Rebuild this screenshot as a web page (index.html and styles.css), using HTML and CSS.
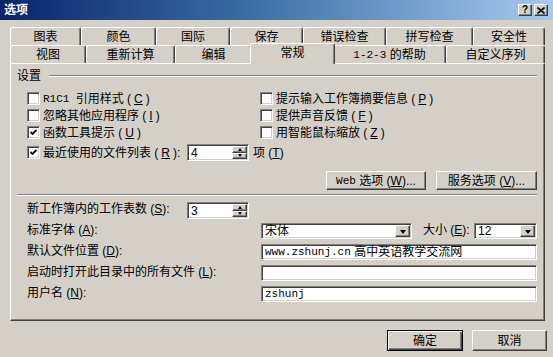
FILE: index.html
```html
<!DOCTYPE html>
<html lang="zh-CN">

<head>
    <meta charset="UTF-8" />
    <title>选项</title>
    <link rel="stylesheet" href="styles.css">
</head>

<body>

    <div class="dialog">
        <div class="titlebar">
            <span class="title">选项</span>
            <div class="caption-buttons">
                <button class="caption-btn help">?</button>
                <button class="caption-btn close">
                    <svg width="8" height="7" viewBox="0 0 8 7"><path d="M0.5 0.5L7.5 6.5M7.5 0.5L0.5 6.5" stroke="#000" stroke-width="1.6" /></svg>
                </button>
            </div>
        </div>

        <div class="tabs">
            <div class="tab-row back">
                <div class="tab">图表</div>
                <div class="tab">颜色</div>
                <div class="tab">国际</div>
                <div class="tab">保存</div>
                <div class="tab">错误检查</div>
                <div class="tab">拼写检查</div>
                <div class="tab">安全性</div>
            </div>
            <div class="tab-row front">
                <div class="tab">视图</div>
                <div class="tab">重新计算</div>
                <div class="tab">编辑</div>
                <div class="tab active">常规</div>
                <div class="tab"><span class="mono">1-2-3</span>&nbsp;的帮助</div>
                <div class="tab">自定义序列</div>
            </div>
        </div>

        <div class="panel">
            <div class="group-title">
                <span>设置</span>
                <div class="etched"></div>
            </div>

            <div class="checks">
                <label class="check"><span class="box"></span><span class="mono">R1C1</span>&nbsp;引用样式 (<u>C</u>)</label>
                <label class="check"><span class="box"></span>提示输入工作簿摘要信息 (<u>P</u>)</label>
                <label class="check"><span class="box"></span>忽略其他应用程序 (<u>I</u>)</label>
                <label class="check"><span class="box"></span>提供声音反馈 (<u>F</u>)</label>
                <label class="check"><span class="box checked"><svg width="7" height="7" viewBox="0 0 7 7"><path d="M0.5 3L2.5 5L6.5 1" fill="none" stroke="#000" stroke-width="1.8" /></svg></span>函数工具提示 (<u>U</u>)</label>
                <label class="check"><span class="box"></span>用智能鼠标缩放 (<u>Z</u>)</label>
                <div class="recent">
                    <label class="check recent-label"><span class="box checked"><svg width="7" height="7" viewBox="0 0 7 7"><path d="M0.5 3L2.5 5L6.5 1" fill="none" stroke="#000" stroke-width="1.8" /></svg></span>最近使用的文件列表 (<u>R</u>):</label>
                    <div class="spin">
                        <span class="field-text">4</span>
                        <div class="spin-btns">
                            <span class="spin-btn"><i class="arrow-up"></i></span>
                            <span class="spin-btn"><i class="arrow-down"></i></span>
                        </div>
                    </div>
                    <span class="unit">项 (<u>T</u>)</span>
                </div>
            </div>

            <div class="panel-buttons">
                <button class="btn web-btn"><span class="mono">Web</span>&nbsp;选项 (<u>W</u>)...</button>
                <button class="btn service-btn">服务选项 (<u>V</u>)...</button>
            </div>

            <div class="etched"></div>

            <div class="form">
                <div class="form-row short">
                    <span class="form-label">新工作簿内的工作表数 (<u>S</u>):</span>
                    <div class="spin">
                        <span class="field-text">3</span>
                        <div class="spin-btns">
                            <span class="spin-btn"><i class="arrow-up"></i></span>
                            <span class="spin-btn"><i class="arrow-down"></i></span>
                        </div>
                    </div>
                </div>
                <div class="form-row">
                    <span class="form-label">标准字体 (<u>A</u>):</span>
                    <div class="combo font-combo">
                        <span class="field-text">宋体</span>
                        <span class="drop-btn"><i class="arrow-down big"></i></span>
                    </div>
                    <span class="size-label">大小 (<u>E</u>):</span>
                    <div class="combo size-combo">
                        <span class="field-text">12</span>
                        <span class="drop-btn"><i class="arrow-down big"></i></span>
                    </div>
                </div>
                <div class="form-row">
                    <span class="form-label">默认文件位置 (<u>D</u>):</span>
                    <div class="textbox"><span class="mono">www.zshunj.cn</span>&nbsp;高中英语教学交流网</div>
                </div>
                <div class="form-row">
                    <span class="form-label">启动时打开此目录中的所有文件 (<u>L</u>):</span>
                    <div class="textbox"></div>
                </div>
                <div class="form-row">
                    <span class="form-label">用户名 (<u>N</u>):</span>
                    <div class="textbox"><span class="mono">zshunj</span></div>
                </div>
            </div>
        </div>

        <div class="footer">
            <button class="btn default-btn">确定</button>
            <button class="btn cancel-btn">取消</button>
        </div>
    </div>

</body>

</html>
```

FILE: styles.css
```css
* {
    box-sizing: border-box;
    margin: 0;
    padding: 0;
}

body {
    width: 553px;
    height: 357px;
    overflow: hidden;
    background: #d4d0c8;
    font-family: "Liberation Sans", "Noto Sans CJK SC", sans-serif;
    font-size: 12px;
    color: #000;
    text-autospace: no-autospace;
}

u {
    text-decoration: underline;
    text-underline-offset: 1px;
}

.mono {
    font-family: "Liberation Mono", monospace;
    font-size: 11px;
}

/* title bar */
.titlebar {
    height: 20px;
    display: flex;
    align-items: center;
    justify-content: space-between;
    padding: 0 5px 0 4px;
    background: linear-gradient(to right, #0a246a, #3a6ea5 45%, #a6caf0);
}

.title {
    color: #fff;
    font-weight: bold;
    line-height: 14px;
}

.caption-buttons {
    display: flex;
    gap: 2px;
}

.caption-btn {
    width: 14px;
    height: 12px;
    display: flex;
    align-items: center;
    justify-content: center;
    background: #d4d0c8;
    border: 1px solid;
    border-color: #fff #404040 #404040 #fff;
    box-shadow: inset -1px -1px #808080;
    font-family: "Liberation Sans", sans-serif;
    font-size: 10px;
    font-weight: bold;
    line-height: 10px;
}

/* tabs */
.tabs {
    padding: 7px 0 0 10px;
    width: 545px;
}

.tab-row {
    display: grid;
    height: 18px;
}

.tab-row.back {
    grid-template-columns: 71px 75px 74px 73px 83px 87px 72px;
}

.tab-row.front {
    grid-template-columns: 76px 89px 77px 81px 113px 99px;
}

.tab {
    display: flex;
    align-items: center;
    justify-content: center;
    line-height: 14px;
    background: #d4d0c8;
    border-top: 1px solid #fff;
    border-left: 1px solid #fff;
    border-right: 1px solid #404040;
    border-radius: 3px 3px 0 0;
    box-shadow: inset -1px 0 #808080;
}

.tab.active {
    position: relative;
    z-index: 1;
    margin: -2px -2px -1px;
    padding-bottom: 2px;
}

/* page */
.panel {
    margin-left: 10px;
    width: 535px;
    height: 258px;
    padding: 5px 7px 0 6px;
    border-top: 1px solid #fff;
    border-left: 1px solid #fff;
    border-right: 1px solid #404040;
    border-bottom: 1px solid #404040;
    box-shadow: inset -1px -1px #808080;
}

.group-title {
    display: flex;
    align-items: center;
    height: 14px;
    line-height: 14px;
}

.group-title .etched {
    flex: 1;
    margin-left: 8px;
}

.etched {
    height: 2px;
    border-top: 1px solid #808080;
    border-bottom: 1px solid #fff;
}

.checks {
    display: grid;
    grid-template-columns: 233px 1fr;
    grid-template-rows: 17px 17px 17px 20px;
    margin: 7px 0 0 10px;
}

.check {
    display: flex;
    align-items: center;
    gap: 3px;
    line-height: 14px;
    white-space: nowrap;
}

.box {
    width: 13px;
    height: 13px;
    flex: none;
    display: flex;
    align-items: center;
    justify-content: center;
    background: #fff;
    border: 1px solid;
    border-color: #808080 #fff #fff #808080;
    box-shadow: inset 1px 1px #404040, inset -1px -1px #d4d0c8;
}

.recent {
    grid-column: 1 / -1;
    align-self: end;
    display: flex;
    align-items: center;
    height: 17px;
}

.recent-label {
    width: 160px;
}

.unit {
    margin-left: 4px;
    line-height: 14px;
}

/* sunken fields */
.spin,
.combo,
.textbox {
    display: flex;
    align-items: center;
    height: 16px;
    padding: 1px;
    background: #fff;
    border: 1px solid;
    border-color: #808080 #fff #fff #808080;
    box-shadow: inset 1px 1px #404040, inset -1px -1px #d4d0c8;
    line-height: 14px;
    white-space: nowrap;
    overflow: hidden;
}

.spin {
    width: 62px;
    height: 17px;
}

.field-text {
    flex: 1;
    padding-left: 2px;
}

.spin-btns {
    display: flex;
    flex-direction: column;
    width: 15px;
    height: 100%;
}

.spin-btn,
.drop-btn {
    display: flex;
    align-items: center;
    justify-content: center;
    background: #d4d0c8;
    border: 1px solid;
    border-color: #fff #404040 #404040 #fff;
    box-shadow: inset -1px -1px #808080;
}

.spin-btn {
    flex: 1;
}

.arrow-up {
    border-left: 2.5px solid transparent;
    border-right: 2.5px solid transparent;
    border-bottom: 3px solid #000;
}

.arrow-down {
    border-left: 2.5px solid transparent;
    border-right: 2.5px solid transparent;
    border-top: 3px solid #000;
}

.arrow-down.big {
    border-left-width: 3.5px;
    border-right-width: 3.5px;
    border-top-width: 4px;
    margin-top: 1px;
}

.drop-btn {
    width: 15px;
    height: 100%;
}

.panel-buttons {
    display: flex;
    justify-content: flex-end;
    gap: 10px;
    margin: 10px 0 4px;
}

.btn {
    height: 19px;
    display: flex;
    align-items: center;
    justify-content: center;
    background: #d4d0c8;
    border: 1px solid;
    border-color: #fff #404040 #404040 #fff;
    box-shadow: inset -1px -1px #808080;
    font-family: inherit;
    font-size: 12px;
    line-height: 14px;
    color: #000;
    white-space: nowrap;
    text-autospace: no-autospace;
}

.web-btn {
    width: 100px;
}

.service-btn {
    width: 101px;
}

/* lower form */
.form {
    display: grid;
    grid-auto-rows: 16px;
    row-gap: 5px;
    margin: 6px 0 0 10px;
}

.form-row {
    display: flex;
    align-items: flex-start;
}

.form-label {
    width: 234px;
    flex: none;
    line-height: 14px;
    white-space: nowrap;
}

.form-row.short .form-label {
    width: 160px;
}

.font-combo {
    width: 151px;
}

.size-label {
    margin-left: 11px;
    line-height: 14px;
}

.size-combo {
    width: 63px;
    margin-left: auto;
}

.textbox {
    flex: 1;
    padding-left: 3px;
}

/* dialog buttons */
.footer {
    display: flex;
    justify-content: flex-end;
    gap: 9px;
    padding: 9px 6px 0 0;
}

.footer .btn {
    height: 21px;
}

.default-btn {
    width: 76px;
    border: 1px solid #000;
    box-shadow: inset 1px 1px #fff, inset -1px -1px #404040, inset -2px -2px #808080;
}

.cancel-btn {
    width: 75px;
}
```
